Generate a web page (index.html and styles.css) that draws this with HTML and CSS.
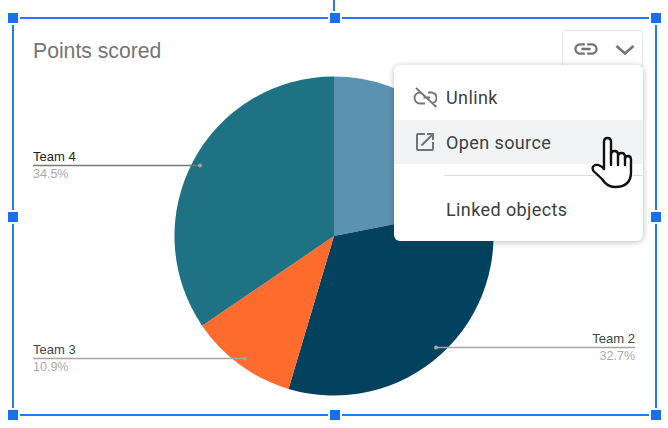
FILE: index.html
```html
<!DOCTYPE html>
<html lang="en">

<head>
    <meta charset="UTF-8">
    <meta name="viewport" content="width=device-width, initial-scale=1.0">
    <title>Points scored</title>
    <link rel="stylesheet" href="styles.css">
</head>

<body>
    <div class="stem"></div>
    <div class="frame">
        <h2 class="chartTitle">Points scored</h2>

        <!-- viewBox uses page coordinates -->
        <svg class="chart" viewBox="14 19 641 395" width="641" height="395">
            <path d="M334 236 L334 76.5 A159.5 159.5 0 0 1 490.5 205.2 Z" fill="#5b92b0" />
            <path d="M334 236 L490.5 205.2 A159.5 159.5 0 0 1 288.5 388.9 Z" fill="#03425f" />
            <path d="M334 236 L288.5 388.9 A159.5 159.5 0 0 1 202.1 325.7 Z" fill="#fd6b2d" />
            <path d="M334 236 L202.1 325.7 A159.5 159.5 0 0 1 334 76.5 Z" fill="#1e7284" />
            <line x1="33" y1="165.5" x2="200" y2="165.5" stroke="#777" stroke-width="1.3" />
            <circle cx="200" cy="165.5" r="2" fill="#a5a5a5" />
            <line x1="33" y1="358.5" x2="245" y2="358.5" stroke="#a5a5a5" stroke-width="1.5" />
            <circle cx="245" cy="358.5" r="2" fill="#a5a5a5" />
            <line x1="436" y1="347.5" x2="635" y2="347.5" stroke="#a5a5a5" stroke-width="1.5" />
            <circle cx="436" cy="347.5" r="2" fill="#a5a5a5" />
        </svg>

        <div class="label team4"><b>Team 4</b><span>34.5%</span></div>
        <div class="label team3"><b>Team 3</b><span>10.9%</span></div>
        <div class="label team2"><b>Team 2</b><span>32.7%</span></div>

        <div class="linkBar">
            <svg viewBox="0 0 24 24" width="28" height="28">
                <path d="M3.9 12c0-1.71 1.39-3.1 3.1-3.1h4V7H7c-2.76 0-5 2.24-5 5s2.24 5 5 5h4v-1.9H7c-1.71 0-3.1-1.39-3.1-3.1zM8 13h8v-2H8v2zm9-6h-4v1.9h4c1.71 0 3.1 1.39 3.1 3.1s-1.39 3.1-3.1 3.1h-4V17h4c2.76 0 5-2.24 5-5s-2.24-5-5-5z" />
            </svg>
            <svg viewBox="0 0 24 24" width="24" height="24">
                <path d="M3.5 9 L12 16.5 L20.5 9" />
            </svg>
        </div>

        <div class="menu">
            <div class="menuItem">
                <svg viewBox="413 85 24 24" width="24" height="24">
                    <path d="M421 92.5 h-1 a5.5 5.5 0 0 0 0 11 h5 M428 92.5 h3.5 a5.5 5.5 0 0 1 1.5 10.6 M423.5 97.5 h6.5 M416 88 L436.5 107" stroke-width="1.9" />
                </svg>
                Unlink
            </div>
            <div class="menuItem hover">
                <svg viewBox="0 0 24 24" width="24" height="24">
                    <path class="solid" d="M19 19H5V5h7V3H5c-1.11 0-2 .9-2 2v14c0 1.1.89 2 2 2h14c1.1 0 2-.9 2-2v-7h-2v7zM14 3v2h3.59l-9.83 9.83 1.41 1.41L19 6.41V10h2V3h-7z" />
                </svg>
                Open source
            </div>
            <div class="menuLine"></div>
            <div class="menuItem linked">Linked objects</div>
        </div>

        <svg class="cursor" viewBox="590 135 44 56" width="44" height="56">
            <path d="M604 166 L604 142 Q604 138 607.5 138 Q611 138 611 142 L611 155 Q611 151 614.5 151 Q618 151 618 155 L618 157 Q618 153 621.5 153 Q625 153 625 157 L625 159 Q625 156 628 156 Q631 156 631 160 L631 172 Q631 187 615 187 Q607 187 602 179 L593.5 171 Q591 167 595 165 Q600 164 604 169 Z" />
            <path d="M611 155 V165 M618 157 V165 M625 159 V165" />
        </svg>

        <i class="handle tl"></i><i class="handle tc"></i><i class="handle tr"></i>
        <i class="handle ml"></i><i class="handle mr"></i>
        <i class="handle bl"></i><i class="handle bc"></i><i class="handle br"></i>
    </div>
</body>

</html>
```

FILE: styles.css
```css
* {
    padding: 0;
    margin: 0;
    box-sizing: border-box;
}

html,
body {
    width: 100%;
    height: 100%;
    background: #fff;
    overflow: hidden;
    font-family: "Liberation Sans", Arial, sans-serif;
}

.frame {
    position: relative;
    width: 645px;
    height: 399px;
    margin: 17px 0 0 12px;
    border: 2px solid #2a78f0;
    padding: 20px 0 0 19px;
}

.stem {
    position: absolute;
    left: 333px;
    top: 0;
    width: 2px;
    height: 12px;
    background: #2a78f0;
}

.chartTitle {
    position: relative;
    font-size: 21.2px;
    font-weight: 400;
    line-height: 24px;
    color: #757575;
}

.chart {
    position: absolute;
    left: 0;
    top: 0;
}

/* slice labels sit on the leader lines */
.label {
    position: absolute;
    display: flex;
    flex-direction: column;
    font-size: 12.5px;
    line-height: 15px;
}

.label b {
    font-size: 13px;
    font-weight: 400;
    color: #222;
    padding-bottom: 3px;
}

.label span {
    color: #aaa;
}

.team4 {
    left: 19px;
    top: 130px;
}

.team3 {
    left: 19px;
    top: 323px;
}

.team3 b,
.team2 b {
    color: #444;
}

.team2 {
    right: 20px;
    top: 312px;
    text-align: right;
}

.linkBar {
    position: absolute;
    left: 548px;
    top: 11px;
    width: 81px;
    height: 37px;
    border: 1px solid #e6e6e6;
    border-radius: 3px;
    display: flex;
    align-items: center;
    gap: 13px;
    padding-left: 9px;
}

.linkBar svg {
    fill: #757575;
}

.linkBar svg:last-child {
    fill: none;
    stroke: #757575;
    stroke-width: 2.6;
}

.menu {
    position: absolute;
    left: 380px;
    top: 46px;
    width: 249px;
    height: 176px;
    background: #fff;
    border-radius: 6px;
    box-shadow: 0 1px 6px rgba(60, 64, 67, 0.35);
    padding-top: 10px;
    font-family: Roboto, "Liberation Sans", sans-serif;
    font-size: 18px;
    letter-spacing: 0.4px;
    color: #3c4043;
}

.menuItem {
    height: 44px;
    display: flex;
    align-items: center;
    gap: 9px;
    padding-left: 19px;
}

.menuItem svg {
    fill: none;
    stroke: #70757a;
    flex-shrink: 0;
}

.menuItem svg .solid {
    fill: #70757a;
    stroke: none;
}

.menuItem.hover {
    background: #f1f3f4;
    margin-top: 1px;
}

.menuItem.linked {
    padding-left: 52px;
    margin-top: 11px;
}

.menuLine {
    height: 1px;
    margin: 11px 0 0 50px;
    background: #dadce0;
}

.cursor {
    position: absolute;
    left: 576px;
    top: 116px;
    fill: #fff;
    stroke: #111;
    stroke-width: 2.4;
    stroke-linejoin: round;
    stroke-linecap: round;
}

.handle {
    position: absolute;
    width: 10px;
    height: 10px;
    margin: -5px 0 0 -5px;
    background: #1a6ef0;
    box-shadow: 0 0 0 2px #fff;
}

.tl,
.ml,
.bl {
    left: -1px;
}

.tc,
.bc {
    left: 50%;
}

.tr,
.mr,
.br {
    left: calc(100% + 1px);
}

.tl,
.tc,
.tr {
    top: -1px;
}

.ml,
.mr {
    top: 50%;
}

.bl,
.bc,
.br {
    top: calc(100% + 1px);
}
```
